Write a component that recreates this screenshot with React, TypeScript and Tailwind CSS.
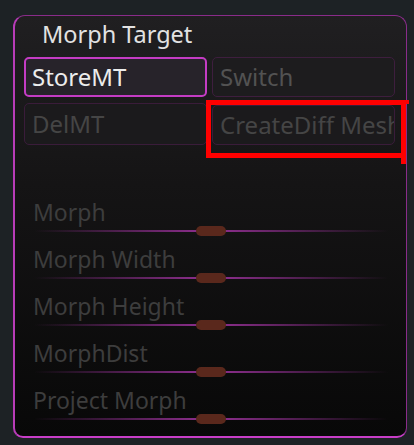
import React from "react";

const font = { fontFamily: '"Noto Sans", "Open Sans", sans-serif' };

function Slider({ label }: { label: string }) {
  return (
    <div className="flex h-[47px] flex-col">
      <div className="h-[34px] pl-[18px] pt-[4px] text-[23px] leading-[30px] text-[#3d3d3d]">{label}</div>
      <div className="relative h-[8px]">
        <div className="absolute left-[19px] right-[18px] top-[3px] h-[2px] bg-[linear-gradient(to_right,rgba(128,40,128,0)_0%,#852c85_45%,#852c85_55%,rgba(128,40,128,0)_100%)]" />
        <div className="absolute left-[181px] top-[-1px] h-[10px] w-[30px] rounded-[5px] bg-[#5a281c]" />
      </div>
    </div>
  );
}

export default function App() {
  return (
    <div className="relative h-[445px] w-[414px] bg-[#1d2225] pl-[13px] pt-[15px]" style={font}>
      <div className="h-[423px] w-[394px] rounded-t-[12px] rounded-b-[10px] border border-l-2 border-b-2 border-[#8a2c8a] border-l-[#b83cb8] border-b-[#c83ec8] bg-[linear-gradient(to_bottom,#201f21,#151415_40%,#080808)]">
        <div className="h-[41px] pl-[27px] pt-[3px] text-[23.5px] leading-[30px] text-[#e2e2e2]">Morph Target</div>
        <div className="grid grid-cols-[183px_183px] gap-x-[5px] gap-y-[6px] pl-[9px]">
          <div className="flex h-[40px] items-center rounded-[5px] border-2 border-[#c43cc4] bg-[#27232a] pl-[6px] text-[24px] text-[#ececec]">StoreMT</div>
          <div className="flex h-[40px] items-center rounded-[5px] border border-[#3e1e3e] bg-[#1d1c1e] pl-[7px] text-[24px] text-[#525252]">Switch</div>
          <div className="flex h-[42px] items-center rounded-[5px] border border-[#3a1c3a] bg-[#1b1a1c] pl-[7px] text-[24px] text-[#454545]">DelMT</div>
          <div className="mt-[2px] flex h-[40px] items-center overflow-hidden whitespace-nowrap rounded-[5px] border border-[#3a1c3a] bg-[#1b1a1c] pl-[7px] text-[24px] text-[#454545]">CreateDiff Mesh</div>
        </div>
        <div className="mt-[48px]">
          <Slider label="Morph" />
          <Slider label="Morph Width" />
          <Slider label="Morph Height" />
          <Slider label="MorphDist" />
          <Slider label="Project Morph" />
        </div>
      </div>
      {/* red annotation box */}
      <div className="pointer-events-none absolute left-[206px] top-[100px] h-[58px] w-[199px] border-[5px] border-r-0 border-[#ff0000]" />
      <div className="pointer-events-none absolute left-[401px] top-[100px] h-[64px] w-[5px] bg-[#ff0000]" />
      <div className="pointer-events-none absolute left-[401px] top-[100px] h-[4px] w-[8px] bg-[#ff0000]" />
    </div>
  );
}
